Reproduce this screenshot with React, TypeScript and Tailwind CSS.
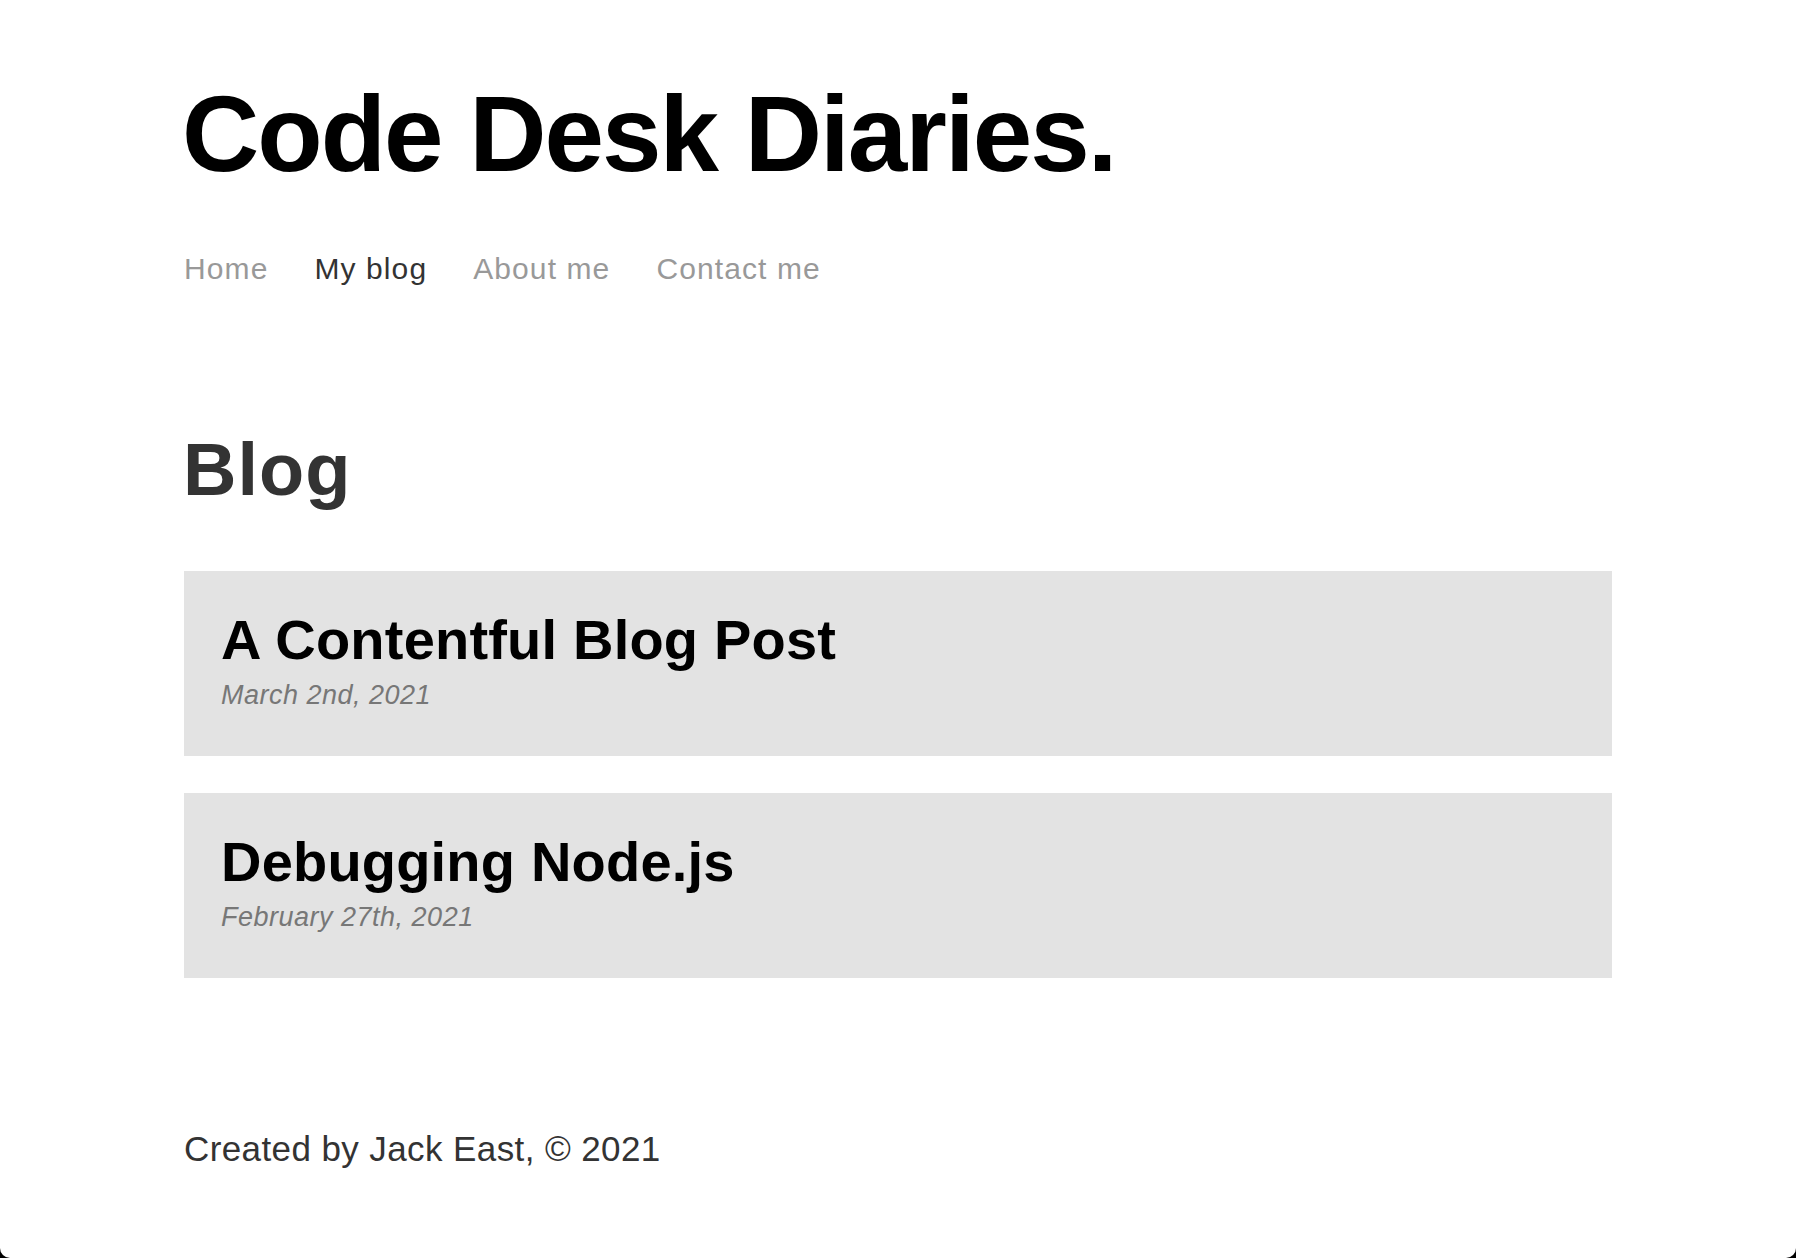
const posts = [
  { title: "A Contentful Blog Post", date: "March 2nd, 2021" },
  { title: "Debugging Node.js", date: "February 27th, 2021" },
];

const links = [
  { label: "Home", active: false },
  { label: "My blog", active: true },
  { label: "About me", active: false },
  { label: "Contact me", active: false },
];

export default function App() {
  return (
    <div className="bg-black min-h-[1258px]">
      <div
        className="min-h-[1258px] bg-white rounded-b-[10px] px-[184px] pt-[81px] pb-[90px]"
        style={{ fontFamily: '"Liberation Sans", Arial, sans-serif' }}
      >
        {/* Header */}
        <h1 className="text-[107px] leading-none font-bold tracking-[-2px] text-black -ml-[2px]">
          Code Desk Diaries.
        </h1>
        <nav className="mt-[66px] flex gap-[46px]">
          {links.map((l) => (
            <a
              key={l.label}
              href="#"
              className={`text-[30px] leading-none tracking-[1.1px] ${
                l.active ? "text-[#333333]" : "text-[#999999]"
              }`}
            >
              {l.label}
            </a>
          ))}
        </nav>

        {/* Blog list */}
        <main className="mt-[149px]">
          <h2 className="text-[74px] leading-none font-bold tracking-[1px] text-[#333333] -ml-[1px]">
            Blog
          </h2>
          <ul className="mt-[64px] flex flex-col gap-[37px]">
            {posts.map((p) => (
              <li key={p.title} className="bg-[#e3e3e3] h-[185px] px-[37px] pt-[41px]">
                <h3 className="text-[56px] leading-none font-bold tracking-[0.2px] text-black">{p.title}</h3>
                <p className="mt-[14px] text-[27px] leading-none italic tracking-[0.5px] text-[#777777]">
                  {p.date}
                </p>
              </li>
            ))}
          </ul>
        </main>

        {/* Footer */}
        <footer className="mt-[153px] text-[35px] leading-none tracking-[0.4px] text-[#333333]">
          Created by Jack East, © 2021
        </footer>
      </div>
    </div>
  );
}
